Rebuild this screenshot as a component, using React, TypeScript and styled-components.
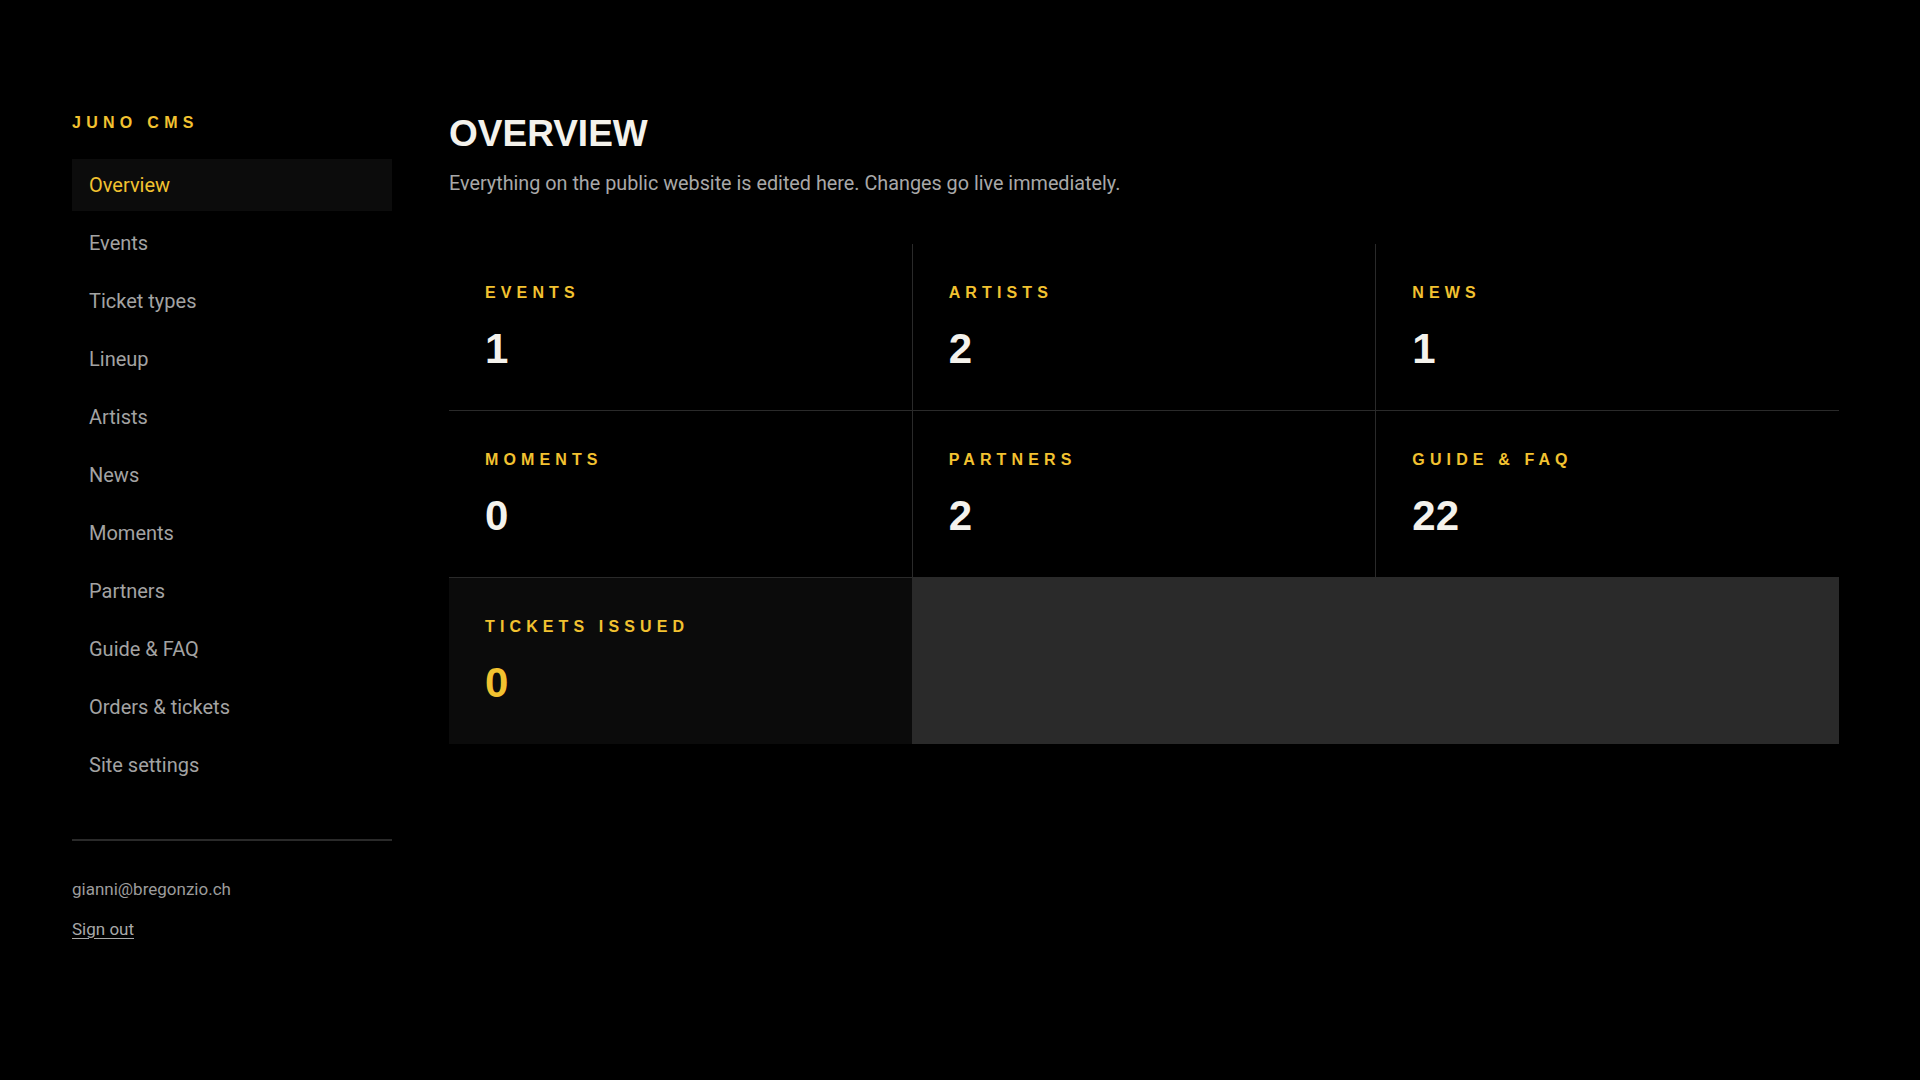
import styled, { createGlobalStyle } from "styled-components";

const Yellow = "#f2c230";
const LightText = "#f4f2ec";
const MutedText = "#a3a3a3";
const LineGrey = "#2a2a2a";

const GlobalStyle = createGlobalStyle`
  html, body {
    margin: 0;
    background: #000;
    color: ${LightText};
    font-family: Roboto, "Liberation Sans", sans-serif;
  }
`;

const Layout = styled.div`
  display: grid;
  grid-template-columns: 320px 1390px;
  column-gap: 57px;
  align-items: start;
  padding: 111px 0 0 72px;
  min-height: 1080px;
  box-sizing: border-box;
`;

const Sidebar = styled.aside`
  display: flex;
  flex-direction: column;
`;

const Brand = styled.div`
  font-family: "Liberation Sans", Arial, sans-serif;
  font-weight: 700;
  font-size: 16px;
  line-height: 24px;
  letter-spacing: 0.33em;
  color: ${Yellow};
  margin-bottom: 24px;
`;

const Nav = styled.nav`
  display: flex;
  flex-direction: column;
  gap: 6px;
`;

const NavItem = styled.a<{ $active?: boolean }>`
  display: flex;
  align-items: center;
  height: 52px;
  padding: 0 17px;
  font-size: 20px;
  color: ${(p) => (p.$active ? Yellow : MutedText)};
  background: ${(p) => (p.$active ? "#0c0c0c" : "transparent")};
  text-decoration: none;
  cursor: pointer;
`;

const Divider = styled.hr`
  border: 0;
  border-top: 2px solid ${LineGrey};
  margin: 48px 0 37px;
`;

const Email = styled.div`
  font-size: 17px;
  line-height: 22px;
  color: #9c9c9c;
`;

const SignOut = styled.a`
  margin-top: 18px;
  font-size: 17px;
  line-height: 22px;
  color: #a8a8a8;
  text-decoration: underline;
  text-underline-offset: 3px;
  cursor: pointer;
  width: fit-content;
`;

const Main = styled.main`
  display: flex;
  flex-direction: column;
  padding-top: 1px;
`;

const Title = styled.h1`
  margin: 0;
  font-family: "Liberation Sans", Arial, sans-serif;
  font-weight: 700;
  font-size: 37px;
  line-height: 44px;
  color: ${LightText};
`;

const Subtitle = styled.p`
  margin: 16px 0 0;
  font-size: 19.8px;
  line-height: 24px;
  color: #a8a8a8;
`;

const StatGrid = styled.section`
  margin-top: 48px;
  display: grid;
  grid-template-columns: repeat(3, 1fr);
  gap: 1px;
  background: ${LineGrey};
`;

const StatCard = styled.div<{ $highlight?: boolean }>`
  display: flex;
  flex-direction: column;
  gap: 23px;
  padding: 40px 36px 37px;
  background: ${(p) => (p.$highlight ? "#0b0b0b" : "#000")};
`;

const StatLabel = styled.div`
  font-family: "Liberation Sans", Arial, sans-serif;
  font-weight: 700;
  font-size: 16px;
  line-height: 18px;
  letter-spacing: 0.32em;
  color: ${Yellow};
`;

const StatValue = styled.div<{ $highlight?: boolean }>`
  font-family: "Liberation Sans", Arial, sans-serif;
  font-weight: 700;
  font-size: 42px;
  line-height: 48px;
  color: ${(p) => (p.$highlight ? Yellow : LightText)};
`;

const navItems = [
  "Overview",
  "Events",
  "Ticket types",
  "Lineup",
  "Artists",
  "News",
  "Moments",
  "Partners",
  "Guide & FAQ",
  "Orders & tickets",
  "Site settings",
];

const stats = [
  { label: "EVENTS", value: 1 },
  { label: "ARTISTS", value: 2 },
  { label: "NEWS", value: 1 },
  { label: "MOMENTS", value: 0 },
  { label: "PARTNERS", value: 2 },
  { label: "GUIDE & FAQ", value: 22 },
  { label: "TICKETS ISSUED", value: 0, highlight: true },
];

export default function App() {
  return (
    <>
      <GlobalStyle />
      <Layout>
        <Sidebar>
          <Brand>JUNO CMS</Brand>
          <Nav>
            {navItems.map((item, i) => (
              <NavItem key={item} $active={i === 0}>
                {item}
              </NavItem>
            ))}
          </Nav>
          <Divider />
          <Email>gianni@bregonzio.ch</Email>
          <SignOut>Sign out</SignOut>
        </Sidebar>
        <Main>
          <Title>OVERVIEW</Title>
          <Subtitle>
            Everything on the public website is edited here. Changes go live
            immediately.
          </Subtitle>
          <StatGrid>
            {stats.map((s) => (
              <StatCard key={s.label} $highlight={s.highlight}>
                <StatLabel>{s.label}</StatLabel>
                <StatValue $highlight={s.highlight}>{s.value}</StatValue>
              </StatCard>
            ))}
          </StatGrid>
        </Main>
      </Layout>
    </>
  );
}
